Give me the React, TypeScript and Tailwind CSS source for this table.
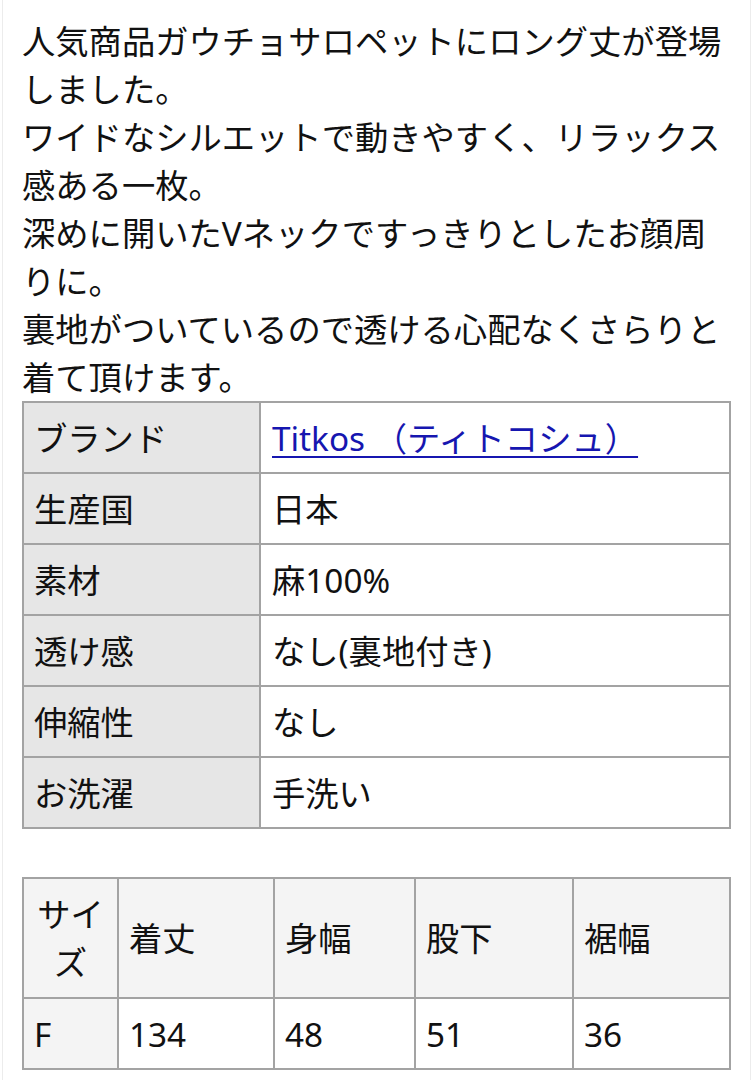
import React from "react";

const font = { fontFamily: '"Noto Sans", "Noto Sans CJK JP", sans-serif' };

export default function App() {
  const rows: [string, React.ReactNode][] = [
    ["ブランド", <a href="#" className="text-[#1616b0] underline underline-offset-[5px] decoration-[2px]">Titkos （ティトコシュ）</a>],
    ["生産国", "日本"],
    ["素材", "麻100%"],
    ["透け感", "なし(裏地付き)"],
    ["伸縮性", "なし"],
    ["お洗濯", "手洗い"],
  ];
  const sizes = ["着丈", "身幅", "股下", "裾幅"];
  const vals = ["134", "48", "51", "36"];
  return (
    <div className="min-h-[1080px] bg-white px-[2px]" style={font}>
      <div className="min-h-[1080px] border-x border-[#ececec] px-[19px] pt-[17px] text-[33.3px] leading-[48px] text-[#111]">
        <p>
          人気商品ガウチョサロペットにロング丈が登場しました。
          <br />
          ワイドなシルエットで動きやすく、リラックス感ある一枚。
          <br />
          深めに開いたVネックですっきりとしたお顔周りに。
          <br />
          裏地がついているので透ける心配なくさらりと着て頂けます。
        </p>
        <table className="w-[709px] table-fixed border-collapse">
          <colgroup>
            <col className="w-[237px]" />
            <col />
          </colgroup>
          <tbody>
            {rows.map(([k, v]) => (
              <tr key={k}>
                <td className="border-2 border-[#a3a3a3] bg-[#e6e6e6] px-[10px] py-[10.5px] align-middle">{k}</td>
                <td className="border-2 border-[#a3a3a3] bg-white px-[11px] py-[10.5px] align-middle">{v}</td>
              </tr>
            ))}
          </tbody>
        </table>
        <table className="mt-[48px] w-[709px] table-fixed border-collapse">
          <colgroup>
            <col className="w-[95px]" />
            <col className="w-[156px]" />
            <col className="w-[141px]" />
            <col className="w-[158px]" />
            <col />
          </colgroup>
          <tbody>
            <tr>
              <td className="border-2 border-[#a3a3a3] bg-[#f4f4f4] px-[10px] py-[11px] text-center align-middle">サイズ</td>
              {sizes.map((s) => (
                <td key={s} className="border-2 border-[#a3a3a3] bg-[#f4f4f4] px-[10px] py-[11px] align-middle">{s}</td>
              ))}
            </tr>
            <tr>
              <td className="border-2 border-[#a3a3a3] bg-[#f4f4f4] px-[10px] py-[10.5px] align-middle">F</td>
              {vals.map((s, i) => (
                <td key={i} className="border-2 border-[#a3a3a3] bg-white px-[10px] py-[10.5px] align-middle">{s}</td>
              ))}
            </tr>
          </tbody>
        </table>
      </div>
    </div>
  );
}
